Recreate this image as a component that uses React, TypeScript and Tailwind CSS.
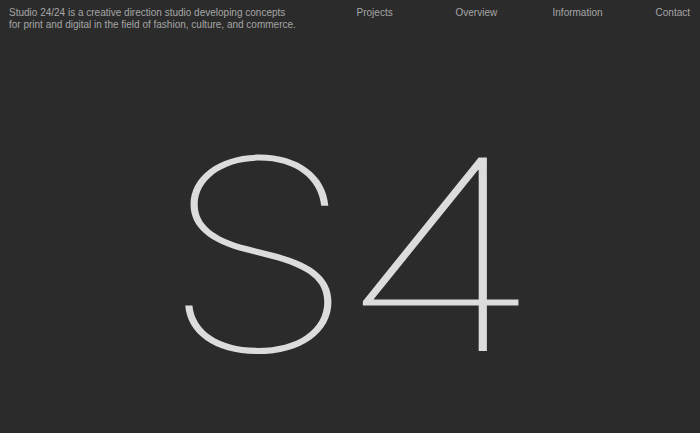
export default function App() {
  return (
    <div className="w-[700px] h-[433px] bg-[#2b2b2b] overflow-hidden flex flex-col font-['Inter','Liberation_Sans',sans-serif]">
      {/* header */}
      <header className="flex items-start justify-between pl-[9px] pr-[10px] pt-[7px] text-[10px] leading-[12px] text-[#a6a6a6] font-['Liberation_Sans',sans-serif]">
        <p className="w-[290px]">
          Studio 24/24 is a creative direction studio developing concepts for print and digital in the field of fashion, culture, and commerce.
        </p>
        <nav className="flex">
          <a className="w-[99px]">Projects</a>
          <a className="w-[97px]">Overview</a>
          <a className="w-[103px]">Information</a>
          <a>Contact</a>
        </nav>
      </header>

      <main className="flex-1 flex items-center justify-center">
        <h1 className="text-[266px] leading-none font-thin tracking-[-0.07em] text-[#dcdcdc] mt-[43px] scale-x-[1.2] translate-x-[-19px]">
          S<span className="inline-block scale-x-[1.09] origin-left translate-x-[3px]">4</span>
        </h1>
      </main>
    </div>
  );
}
